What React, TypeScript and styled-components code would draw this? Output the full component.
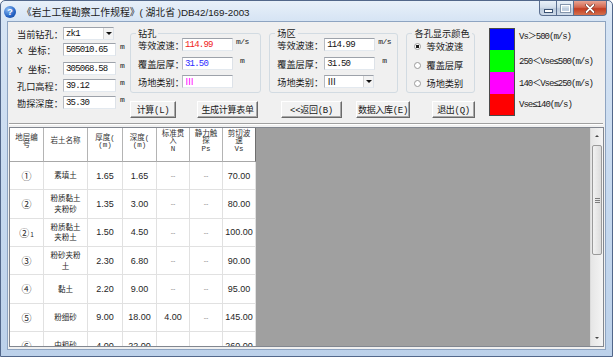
import React from 'react'
import styled, { createGlobalStyle } from 'styled-components'

const cjk = `"Noto Sans CJK SC", "Liberation Sans", sans-serif`
const mono = `"Liberation Mono", "Noto Sans CJK SC", monospace`
const sans = `"Liberation Sans", "Noto Sans CJK SC", sans-serif`

const GlobalStyle = createGlobalStyle`
  html, body { margin: 0; padding: 0; background: #ffffff; }
  body { font-family: ${sans}; }
`

const Window = styled.div`
  width: 613px;
  height: 357px;
  box-sizing: border-box;
  display: flex;
  flex-direction: column;
  border: 1px solid #52678a;
  border-radius: 5px 5px 0 0;
  background: linear-gradient(180deg, #e8f0f9 0px, #d6e4f4 20px, #c6d9ef 55%, #bcd1ea 100%);
  overflow: hidden;
`

const TitleBar = styled.div`
  height: 20px;
  flex-shrink: 0;
  display: flex;
  align-items: center;
  padding-left: 3px;
`

const HelpIcon = styled.div`
  width: 12px;
  height: 12px;
  margin-top: 2px;
  border-radius: 50%;
  background: radial-gradient(circle at 35% 30%, #8cbcf4, #2462c4 60%, #143f8c);
  color: #fff;
  font: bold 9px ${sans};
  display: flex;
  align-items: center;
  justify-content: center;
`

const TitleText = styled.div`
  margin-left: 6px;
  margin-top: 2px;
  font-family: ${sans};
  font-size: 9.8px;
  color: #1b1b1b;
  white-space: nowrap;
`

const Controls = styled.div`
  margin-left: auto;
  margin-right: 5px;
  align-self: flex-start;
  display: flex;
`

const CtrlBtn = styled.div<{ $w: number; $close?: boolean; $first?: boolean }>`
  width: ${p => p.$w}px;
  height: 15px;
  box-sizing: border-box;
  border: 1px solid #5b6f90;
  border-top: none;
  border-left: ${p => (p.$first ? '1px solid #5b6f90' : 'none')};
  border-radius: ${p => (p.$first ? '0 0 0 4px' : p.$close ? '0 0 4px 0' : '0')};
  background: ${p =>
    p.$close
      ? 'linear-gradient(180deg, #e8a493 0%, #d4674f 45%, #c33d22 55%, #d5704d 100%)'
      : 'linear-gradient(180deg, #e9f0f8 0%, #d3deeb 45%, #bccbdd 55%, #cdd9e8 100%)'};
  display: flex;
  align-items: center;
  justify-content: center;
`

const MinGlyph = styled.span`
  width: 7px;
  height: 2px;
  margin-top: 5px;
  background: #fff;
  border: 1px solid #3b5273;
`

const MaxGlyph = styled.span`
  width: 7px;
  height: 5px;
  border: 1px solid #ffffff;
  outline: 1px solid #8596ad;
`

const Client = styled.div`
  flex: 1;
  min-height: 0;
  margin: 0 6px 6px 6px;
  border: 1px solid #8ea4c1;
  background: #f0f0f0;
  display: flex;
  flex-direction: column;
`

const TopPanel = styled.div`
  height: 101px;
  flex-shrink: 0;
  box-sizing: border-box;
  display: flex;
  padding-left: 9px;
`

const FieldColumn = styled.div`
  width: 113px;
  flex-shrink: 0;
  padding-top: 5px;
  display: flex;
  flex-direction: column;
`

const FieldRow = styled.div<{ $mt: number; $pl?: number }>`
  display: flex;
  align-items: center;
  height: 13px;
  margin-top: ${p => p.$mt}px;
  padding-left: ${p => p.$pl || 0}px;
`

const Label = styled.span<{ $w: number }>`
  width: ${p => p.$w}px;
  flex-shrink: 0;
  font-family: ${mono};
  font-size: 9.2px;
  color: #1a1a1a;
  white-space: nowrap;
`

const TextBox = styled.div<{ $w: number; $color?: string }>`
  width: ${p => p.$w}px;
  height: 13px;
  flex-shrink: 0;
  box-sizing: border-box;
  background: #ffffff;
  border: 1px solid;
  border-color: #9da2aa #dde2e8 #e3e9ef #b6bac1;
  padding-left: 2px;
  display: flex;
  align-items: center;
  font-family: ${mono};
  font-size: 9px;
  letter-spacing: -0.8px;
  color: ${p => p.$color || '#111'};
  white-space: nowrap;
  overflow: hidden;
`

const DropBtn = styled.span`
  margin-left: auto;
  width: 10px;
  height: 100%;
  box-sizing: border-box;
  border-left: 1px solid #d5d5d5;
  background: #f3f3f3;
  display: flex;
  align-items: center;
  justify-content: center;
  &::after {
    content: '';
    border-left: 3px solid transparent;
    border-right: 3px solid transparent;
    border-top: 3px solid #111;
  }
`

const Unit = styled.span<{ $ml?: number }>`
  margin-left: ${p => p.$ml ?? 4}px;
  align-self: flex-start;
  margin-top: -1px;
  font-family: ${mono};
  font-size: 8px;
  letter-spacing: -0.5px;
  color: #222;
`

const Center = styled.div`
  width: 345px;
  flex-shrink: 0;
  display: flex;
  flex-direction: column;
`

const GroupsRow = styled.div`
  display: flex;
  gap: 8px;
  margin-top: 11px;
`

const GroupBox = styled.div<{ $w: number }>`
  width: ${p => p.$w}px;
  height: 60px;
  box-sizing: border-box;
  border: 1px solid #d2dbe2;
  border-radius: 3px;
  display: flex;
  flex-direction: column;
`

const GroupTitle = styled.div`
  width: fit-content;
  height: 11px;
  margin: -6px 0 0 5px;
  padding: 0 2px;
  background: #f0f0f0;
  font-family: ${cjk};
  font-size: 9.2px;
  line-height: 11px;
  color: #1a1a1a;
  white-space: nowrap;
`

const Radio = styled.span<{ $on?: boolean }>`
  width: 7px;
  height: 7px;
  flex-shrink: 0;
  box-sizing: border-box;
  border-radius: 50%;
  border: 1px solid #9a9a9a;
  background: ${p =>
    p.$on ? 'radial-gradient(circle, #1d1d1d 0 1.6px, #ffffff 2px)' : '#ffffff'};
`

const RadioText = styled.span`
  margin-left: 5px;
  font-family: ${cjk};
  font-size: 9.2px;
  line-height: 11px;
  color: #1a1a1a;
  white-space: nowrap;
`

const ButtonsRow = styled.div`
  display: flex;
  margin-top: 8px;
`

const Button = styled.div<{ $w: number; $ml: number }>`
  width: ${p => p.$w}px;
  height: 17px;
  margin-left: ${p => p.$ml}px;
  flex-shrink: 0;
  box-sizing: border-box;
  background: #f2f2f2;
  border: 1px solid;
  border-color: #ffffff #6a6a6a #6a6a6a #ffffff;
  box-shadow: inset -1px -1px 0 #a8a8a8;
  display: flex;
  align-items: center;
  justify-content: center;
  font-family: ${mono};
  font-size: 9px;
  letter-spacing: -0.3px;
  color: #1a1a1a;
  white-space: nowrap;
`

const Legend = styled.div`
  margin-left: 14px;
  margin-top: 6px;
  display: flex;
  flex-direction: column;
`

const LegendRow = styled.div`
  height: 22px;
  display: flex;
  align-items: center;
`

const Swatch = styled.div<{ $c: string }>`
  width: 26px;
  height: 22px;
  flex: none;
  box-sizing: border-box;
  border-left: 1px solid #4a4a4a;
  border-right: 1px solid #4a4a4a;
  background: ${p => p.$c};
`

const LegendLabel = styled.span<{ $up?: number }>`
  margin-left: 4px;
  margin-bottom: ${p => p.$up || 0}px;
  font-family: ${mono};
  font-size: 9px;
  letter-spacing: -1px;
  color: #1a1a1a;
  white-space: nowrap;
`

const Separator = styled.div`
  height: 0;
  flex-shrink: 0;
  margin: 0 2px 0 1px;
  border-top: 1px solid #a0a0a0;
  border-bottom: 1px solid #ffffff;
`

const GridBox = styled.div`
  flex: 1;
  min-height: 0;
  margin: 2px 1px 2px 1px;
  border: 1px solid #828790;
  background: #a0a0a0;
  display: flex;
  overflow: hidden;
`

const Table = styled.div`
  width: 246px;
  flex-shrink: 0;
  display: grid;
  grid-template-columns: 34px 44px 35px 34px 33px 33px 33px;
  grid-template-rows: 34px;
  grid-auto-rows: 28.33px;
  align-content: start;
  overflow: hidden;
`

const HeadCell = styled.div<{ $last?: boolean }>`
  background: #ffffff;
  border-right: 1px solid ${p => (p.$last ? '#6f6f6f' : '#b4b4b4')};
  border-bottom: 1px solid #a8a8a8;
  padding-bottom: 5px;
  display: flex;
  flex-direction: column;
  align-items: center;
  justify-content: center;
  font-family: ${mono};
  font-size: 7.5px;
  line-height: 7.3px;
  color: #333;
  text-align: center;
`

const Cell = styled.div`
  background: #ffffff;
  border-right: 1px solid #e1e1e1;
  border-bottom: 1px solid #e1e1e1;
  display: flex;
  align-items: center;
  justify-content: center;
  text-align: center;
  font-family: ${sans};
  font-size: 9px;
  color: #262626;
`

const NameCell = styled(Cell)`
  padding: 0 4px;
  font-family: ${cjk};
  font-size: 7.5px;
  line-height: 10.5px;
  word-break: break-all;
`

const NoCell = styled(Cell)`
  font-family: ${cjk};
  font-size: 10px;
`

const Sub = styled.span`
  font-size: 6.5px;
  align-self: flex-end;
  margin: 0 0 7px 1px;
`

const Dash = styled(Cell)`
  font-size: 7px;
  color: #8a8a8a;
`

const Gray = styled.div`
  flex: 1;
  background: #a0a0a0;
`

const ScrollBar = styled.div`
  width: 13px;
  flex-shrink: 0;
  background: linear-gradient(90deg, #e6e6e6, #f4f4f4);
  border-left: 1px solid #dcdcdc;
  box-sizing: border-box;
  display: flex;
  flex-direction: column;
`

const Arrow = styled.div<{ $down?: boolean }>`
  height: 16px;
  display: flex;
  align-items: center;
  justify-content: center;
  &::after {
    content: '';
    border-left: 2px solid transparent;
    border-right: 2px solid transparent;
    ${p => (p.$down ? 'border-top: 2px solid #444;' : 'border-bottom: 2px solid #444;')}
  }
`

const Thumb = styled.div`
  height: 110px;
  margin: 1px 1px 0 1px;
  box-sizing: border-box;
  border: 1px solid #9a9a9a;
  border-radius: 2px;
  background: linear-gradient(90deg, #f2f2f2, #dcdcdc);
  display: flex;
  align-items: center;
  justify-content: center;
`

const Grip = styled.span`
  width: 5px;
  height: 5px;
  background: repeating-linear-gradient(180deg, #7d7d7d 0 1px, transparent 1px 2px);
`

const Spacer = styled.div`
  flex: 1;
`

type Layer = {
  no: string
  sub?: string
  name: string
  h: string
  d: string
  n: string
  ps: string
  vs: string
}

const layers: Layer[] = [
  { no: '①', name: '素填土', h: '1.65', d: '1.65', n: '--', ps: '--', vs: '70.00' },
  { no: '②', name: '粉质黏土夹粉砂', h: '1.35', d: '3.00', n: '--', ps: '--', vs: '80.00' },
  { no: '②', sub: '1', name: '粉质黏土夹粉土', h: '1.50', d: '4.50', n: '--', ps: '--', vs: '100.00' },
  { no: '③', name: '粉砂夹粉土', h: '2.30', d: '6.80', n: '--', ps: '--', vs: '90.00' },
  { no: '④', name: '黏土', h: '2.20', d: '9.00', n: '--', ps: '--', vs: '95.00' },
  { no: '⑤', name: '粉细砂', h: '9.00', d: '18.00', n: '4.00', ps: '--', vs: '145.00' },
  { no: '⑥', name: '中粗砂', h: '4.00', d: '22.00', n: '--', ps: '--', vs: '260.00' },
]

const headers = [
  ['地层编', '号'],
  ['岩土名称'],
  ['厚度(', '(m)'],
  ['深度(', '(m)'],
  ['标准贯', '入', 'N'],
  ['静力触', '探', 'Ps'],
  ['剪切波', '速', 'Vs'],
]

const legend = [
  { c: '#0000ff', t: 'Vs＞500(m/s)', up: 7 },
  { c: '#00ff00', t: '250＜Vse≤500(m/s)', up: 1 },
  { c: '#ff00ff', t: '140＜Vse≤250(m/s)', up: 1 },
  { c: '#ff0000', t: 'Vse≤140(m/s)', up: 1 },
]

const ValueCell = ({ v }: { v: string }) => (v === '--' ? <Dash>--</Dash> : <Cell>{v}</Cell>)

const App = () => {
  return (
    <>
      <GlobalStyle />
      <Window>
        <TitleBar>
          <HelpIcon>?</HelpIcon>
          <TitleText>《岩土工程勘察工作规程》( 湖北省 )DB42/169-2003</TitleText>
          <Controls>
            <CtrlBtn $w={18} $first>
              <MinGlyph />
            </CtrlBtn>
            <CtrlBtn $w={17}>
              <MaxGlyph />
            </CtrlBtn>
            <CtrlBtn $w={33} $close>
              <svg width="10" height="9" viewBox="0 0 10 9">
                <path d="M1.5 1 L8.5 8 M8.5 1 L1.5 8" stroke="#5a1a10" strokeWidth="3" strokeLinecap="round" />
                <path d="M1.5 1 L8.5 8 M8.5 1 L1.5 8" stroke="#ffffff" strokeWidth="1.8" strokeLinecap="round" />
              </svg>
            </CtrlBtn>
          </Controls>
        </TitleBar>

        <Client>
          <TopPanel>
            <FieldColumn>
              <FieldRow $mt={0}>
                <Label $w={46}>当前钻孔：</Label>
                <TextBox $w={51}>
                  zk1
                  <DropBtn />
                </TextBox>
              </FieldRow>
              <FieldRow $mt={3}>
                <Label $w={46}>X 坐标：</Label>
                <TextBox $w={53}>505010.65</TextBox>
                <Unit>m</Unit>
              </FieldRow>
              <FieldRow $mt={6}>
                <Label $w={46}>Y 坐标：</Label>
                <TextBox $w={53}>305068.58</TextBox>
                <Unit>m</Unit>
              </FieldRow>
              <FieldRow $mt={4}>
                <Label $w={46}>孔口高程：</Label>
                <TextBox $w={53}>39.12</TextBox>
                <Unit>m</Unit>
              </FieldRow>
              <FieldRow $mt={4}>
                <Label $w={46}>勘探深度：</Label>
                <TextBox $w={53}>35.30</TextBox>
                <Unit>m</Unit>
              </FieldRow>
            </FieldColumn>

            <Center>
              <GroupsRow>
                <GroupBox $w={134}>
                  <GroupTitle>钻孔</GroupTitle>
                  <FieldRow $mt={-1} $pl={7}>
                    <Label $w={44}>等效波速：</Label>
                    <TextBox $w={51} $color="#f02020">114.99</TextBox>
                    <Unit $ml={3}>m/s</Unit>
                  </FieldRow>
                  <FieldRow $mt={6} $pl={7}>
                    <Label $w={44}>覆盖层厚：</Label>
                    <TextBox $w={51} $color="#2a2aff">31.50</TextBox>
                    <Unit $ml={7}>m</Unit>
                  </FieldRow>
                  <FieldRow $mt={5} $pl={7}>
                    <Label $w={44}>场地类别：</Label>
                    <TextBox $w={51} $color="#ff00ff">Ⅲ</TextBox>
                  </FieldRow>
                </GroupBox>

                <GroupBox $w={132}>
                  <GroupTitle>场区</GroupTitle>
                  <FieldRow $mt={-1} $pl={7}>
                    <Label $w={47}>等效波速：</Label>
                    <TextBox $w={51}>114.99</TextBox>
                    <Unit $ml={3}>m/s</Unit>
                  </FieldRow>
                  <FieldRow $mt={6} $pl={7}>
                    <Label $w={47}>覆盖层厚：</Label>
                    <TextBox $w={51}>31.50</TextBox>
                    <Unit $ml={7}>m</Unit>
                  </FieldRow>
                  <FieldRow $mt={5} $pl={7}>
                    <Label $w={47}>场地类别：</Label>
                    <TextBox $w={50}>
                      Ⅲ
                      <DropBtn />
                    </TextBox>
                  </FieldRow>
                </GroupBox>

                <GroupBox $w={70}>
                  <GroupTitle>各孔显示颜色</GroupTitle>
                  <FieldRow $mt={1} $pl={7}>
                    <Radio $on />
                    <RadioText>等效波速</RadioText>
                  </FieldRow>
                  <FieldRow $mt={6} $pl={7}>
                    <Radio />
                    <RadioText>覆盖层厚</RadioText>
                  </FieldRow>
                  <FieldRow $mt={5} $pl={7}>
                    <Radio />
                    <RadioText>场地类别</RadioText>
                  </FieldRow>
                </GroupBox>
              </GroupsRow>

              <ButtonsRow>
                <Button $w={46} $ml={0}>计算(L)</Button>
                <Button $w={61} $ml={21}>生成计算表单</Button>
                <Button $w={61} $ml={23}>&lt;&lt;返回(B)</Button>
                <Button $w={54} $ml={14}>数据入库(E)</Button>
                <Button $w={43} $ml={22}>退出(Q)</Button>
              </ButtonsRow>
            </Center>

            <Legend>
              {legend.map((l, i) => (
                <LegendRow key={l.c}>
                  <Swatch
                    $c={l.c}
                    style={{
                      borderTop: i === 0 ? '1px solid #4a4a4a' : undefined,
                      borderBottom: i === legend.length - 1 ? '1px solid #4a4a4a' : undefined,
                    }}
                  />
                  <LegendLabel $up={l.up}>{l.t}</LegendLabel>
                </LegendRow>
              ))}
            </Legend>
          </TopPanel>

          <Separator />

          <GridBox>
            <Table>
              {headers.map((lines, i) => (
                <HeadCell key={i} $last={i === headers.length - 1}>
                  {lines.map(l => (
                    <span key={l}>{l}</span>
                  ))}
                </HeadCell>
              ))}
              {layers.map((r, i) => (
                <React.Fragment key={i}>
                  <NoCell>
                    {r.no}
                    {r.sub && <Sub>{r.sub}</Sub>}
                  </NoCell>
                  <NameCell>{r.name}</NameCell>
                  <ValueCell v={r.h} />
                  <ValueCell v={r.d} />
                  <ValueCell v={r.n} />
                  <ValueCell v={r.ps} />
                  <ValueCell v={r.vs} />
                </React.Fragment>
              ))}
            </Table>
            <Gray />
            <ScrollBar>
              <Arrow />
              <Thumb>
                <Grip />
              </Thumb>
              <Spacer />
              <Arrow $down />
            </ScrollBar>
          </GridBox>
        </Client>
      </Window>
    </>
  )
}

export default App
